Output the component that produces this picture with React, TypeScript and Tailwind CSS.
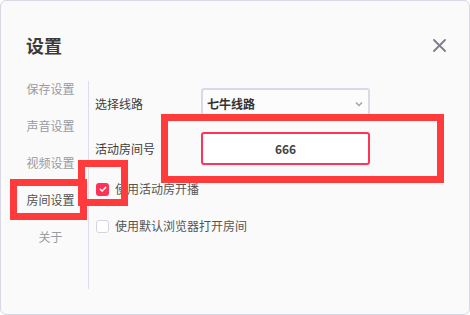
import { useState } from "react";

const navItems = ["保存设置", "声音设置", "视频设置", "房间设置", "关于"];

const App = () => {
  const [active] = useState("房间设置");
  const [useActive, setUseActive] = useState(true);
  const [useBrowser, setUseBrowser] = useState(false);

  return (
    <div
      className="relative w-[470px] h-[315px] overflow-hidden rounded-[6px] border border-[#d6d8e3] bg-[#fafafa] text-[12px] text-[#444]"
      style={{ fontFamily: '"Noto Sans CJK SC", "Noto Sans", sans-serif' }}
    >
      {/* Header */}
      <div className="flex items-center justify-between pl-[25px] pr-[23px] pt-[31px]">
        <h1 className="text-[18px] font-bold leading-[26px] text-[#3b3b3b]">设置</h1>
        <button className="flex h-[14px] w-[14px] items-center justify-center">
          <svg width="13" height="13" viewBox="0 0 13 13" fill="none">
            <path d="M1 1L12 12M12 1L1 12" stroke="#7b7f8a" strokeWidth="1.8" strokeLinecap="round" />
          </svg>
        </button>
      </div>

      {/* Body */}
      <div className="mt-[23px] flex">
        {/* Nav */}
        <nav className="flex w-[87px] flex-col gap-[21px] pl-[25px] pr-[13px]">
          {navItems.map((item) => (
            <div
              key={item}
              className={`text-center leading-[16px] ${
                item === active ? "text-[#555250]" : "text-[#999ba3]"
              }`}
            >
              {item}
            </div>
          ))}
        </nav>

        {/* Content */}
        <div className="h-[208px] flex-1 border-l border-[#dcdfea] pl-[6px] pt-[7px]">
          <div className="flex items-center">
            <span className="w-[106px] text-[#3d3d3d]">选择线路</span>
            <div className="flex h-[32px] w-[169px] items-center justify-between rounded-[3px] border-2 border-[#d8dbe7] bg-[#fcfcfc] pl-[4px] pr-[5px]">
              <span className="font-bold text-[#333]">七牛线路</span>
              <svg width="8" height="6" viewBox="0 0 8 6" fill="none">
                <path d="M1 1.5L4 4.5L7 1.5" stroke="#a0a4ae" strokeWidth="1.5" />
              </svg>
            </div>
          </div>

          <div className="mt-[12px] flex items-center">
            <span className="w-[106px] text-[#3d3d3d]">活动房间号</span>
            <div className="flex h-[33px] w-[169px] items-center justify-center rounded-[3px] border-2 border-[#ff3458] bg-white">
              <span className="font-bold text-[#444]">666</span>
            </div>
          </div>

          <label className="mt-[16px] flex cursor-pointer items-center gap-[6px] pl-[1px] leading-[16px] text-[#555]">
            <span
              onClick={() => setUseActive(!useActive)}
              className={`flex h-[13px] w-[13px] items-center justify-center rounded-[3px] ${
                useActive ? "bg-[#ff3355]" : "border border-[#d3d6e1] bg-white"
              }`}
            >
              {useActive && (
                <svg width="8" height="6" viewBox="0 0 8 6" fill="none">
                  <path d="M1 3L3.2 5L7 1" stroke="white" strokeWidth="1.6" />
                </svg>
              )}
            </span>
            使用活动房开播
          </label>

          <label className="mt-[21px] flex cursor-pointer items-center gap-[6px] pl-[1px] leading-[16px] text-[#555]">
            <span
              onClick={() => setUseBrowser(!useBrowser)}
              className={`flex h-[13px] w-[13px] items-center justify-center rounded-[3px] ${
                useBrowser ? "bg-[#ff3355]" : "border border-[#d3d6e1] bg-white"
              }`}
            />
            使用默认浏览器打开房间
          </label>
        </div>
      </div>

      {/* Red annotation boxes */}
      <div className="pointer-events-none absolute left-[9px] top-[178px] h-[41px] w-[77px] border-[7px] border-[#ff3b3b]" />
      <div className="pointer-events-none absolute left-[77px] top-[159px] h-[46px] w-[50px] border-[7px] border-[#ff3b3b]" />
      <div className="pointer-events-none absolute left-[160px] top-[113px] h-[69px] w-[283px] border-[7px] border-[#ff3b3b]" />
    </div>
  );
};

export default App;
